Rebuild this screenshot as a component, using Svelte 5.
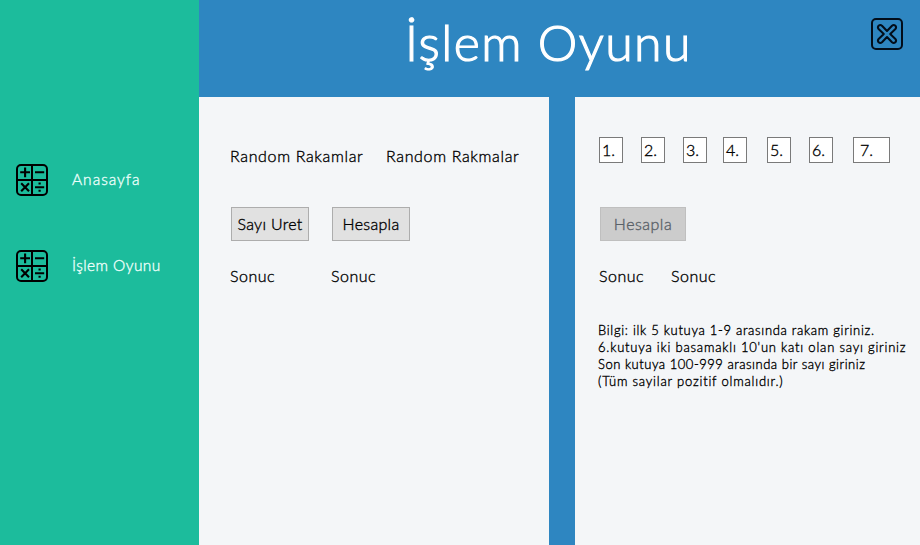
<script>
  const menu = [
    { label: 'Anasayfa', spacing: 1 },
    { label: 'İşlem Oyunu', spacing: 0.42 }
  ];
  const boxes = [
    { value: '1.', width: 24, gap: 0 },
    { value: '2.', width: 24, gap: 18 },
    { value: '3.', width: 24, gap: 18 },
    { value: '4.', width: 24, gap: 16 },
    { value: '5.', width: 24, gap: 20 },
    { value: '6.', width: 24, gap: 18 },
    { value: '7.', width: 37, gap: 20 }
  ];
  const info = [
    { text: 'Bilgi: ilk 5 kutuya 1-9 arasında rakam giriniz.', spacing: 0.7 },
    { text: "6.kutuya iki basamaklı 10'un katı olan sayı giriniz", spacing: 0.79 },
    { text: 'Son kutuya 100-999 arasında bir sayı giriniz', spacing: 0.52 },
    { text: '(Tüm sayilar pozitif olmalıdır.)', spacing: 0.8 }
  ];
</script>

<div class="window">
  <nav>
    {#each menu as item}
      <div class="item">
        <svg width="32" height="32" viewBox="0 0 32 32" fill="none" stroke="#000" stroke-width="2">
          <rect x="1" y="1" width="30" height="30" rx="4" />
          <path d="M16 1V31M1 16H31" />
          <path d="M4.2 8.3H14M9.1 3.4V13.2M19 8.3H28.2M5.2 19.3L13 27.2M13 19.3L5.2 27.2M19 23.2H28.2" stroke-width="2.1" />
          <path d="M22.5 19.6h2.2M22.5 26.8h2.2" stroke-width="2" />
        </svg>
        <span style="letter-spacing: {item.spacing}px">{item.label}</span>
      </div>
    {/each}
  </nav>
  <main>
    <header>
      <h1>İşlem Oyunu</h1>
      <svg class="close" width="32" height="32" viewBox="0 0 32 32" fill="none" stroke="#020d1a" stroke-width="2">
        <rect x="1" y="1" width="30" height="30" rx="4" />
        <path d="M16 13L21 7.7Q22.7 6.2 24.4 7.7Q25.8 9.3 24.4 11L19.2 16L24.4 21Q25.8 22.7 24.4 24.3Q22.7 25.8 21 24.3L16 19L11 24.3Q9.3 25.8 7.6 24.3Q6.2 22.7 7.6 21L12.8 16L7.6 11Q6.2 9.3 7.6 7.7Q9.3 6.2 11 7.7Z" stroke-linejoin="round" />
      </svg>
    </header>
    <div class="panels">
      <section class="left">
        <div class="labels"><span>Random Rakamlar</span><span>Random Rakmalar</span></div>
        <div class="buttons"><button>Sayı Uret</button><button>Hesapla</button></div>
        <div class="results"><span>Sonuc</span><span>Sonuc</span></div>
      </section>
      <section class="right">
        <div class="boxes">
          {#each boxes as box}
            <div class="box" class:wide={box.width > 24} style="width: {box.width}px; margin-left: {box.gap}px">{box.value}</div>
          {/each}
        </div>
        <div class="buttons"><button disabled>Hesapla</button></div>
        <div class="results"><span>Sonuc</span><span>Sonuc</span></div>
        <div class="info">
          {#each info as line}
            <div style="letter-spacing: {line.spacing}px">{line.text}</div>
          {/each}
        </div>
      </section>
    </div>
  </main>
</div>

<style>
  .window {
    display: flex;
    width: 920px;
    height: 545px;
    overflow: hidden;
    font: 300 16px/20px "Century Gothic", Lato, sans-serif;
    font-variant-ligatures: none;
    -webkit-text-stroke: 0.35px;
    color: #000;
    white-space: nowrap;
  }
  .window * { box-sizing: border-box; }
  svg { display: block; flex: none; }
  nav {
    width: 199px;
    flex: none;
    background: #1cbc9c;
    padding: 164px 0 0 16px;
    display: flex;
    flex-direction: column;
    gap: 54px;
  }
  .item { display: flex; align-items: center; gap: 24px; height: 32px; color: #ecfffb; font-size: 15.5px; }
  .item span { padding-bottom: 2px; }
  main { flex: 1; display: flex; flex-direction: column; background: #2e86c1; }
  header { height: 97px; display: flex; justify-content: space-between; padding: 18px 17px 0 206px; }
  h1 {
    margin: -3px 0 0;
    font-size: 50px;
    line-height: 54px;
    font-weight: 300;
    letter-spacing: 1.4px;
    color: #fff;
    -webkit-text-stroke: 1.2px;
  }
  .panels { flex: 1; display: flex; justify-content: space-between; }
  section { background: #f4f6f8; }
  .left { width: 350px; padding: 49px 0 0 31px; }
  .right { width: 345px; padding: 40px 0 0 23px; }
  .labels { display: flex; letter-spacing: 0.65px; }
  .labels span { width: 156px; }
  .buttons { display: flex; gap: 23px; }
  button {
    width: 78px;
    height: 34px;
    padding: 0;
    border: 1px solid #adadad;
    background: #e1e1e1;
    color: #000;
    font: inherit;
    letter-spacing: 0.3px;
    -webkit-text-stroke: 0.35px;
  }
  .left .buttons { margin: 41px 0 0 1px; }
  .left .results { margin-top: 25px; letter-spacing: 0.5px; }
  .left .results span { width: 101px; }
  .results { display: flex; }
  .boxes { display: flex; height: 26px; padding-left: 1px; }
  .box { height: 26px; border: 1px solid #7a7a7a; background: #fff; padding: 2px 0 0 2px; }
  .box.wide { padding-left: 6px; }
  .right .buttons { margin: 44px 0 0 2px; }
  .right button { width: 86px; background: #ccc; border-color: #bfbfbf; color: #596168; letter-spacing: 0.5px; }
  .right .results { margin: 25px 0 0 1px; letter-spacing: 0.5px; }
  .right .results span { width: 72px; }
  .info { margin-top: 36px; font-size: 13px; line-height: 17px; }
</style>
